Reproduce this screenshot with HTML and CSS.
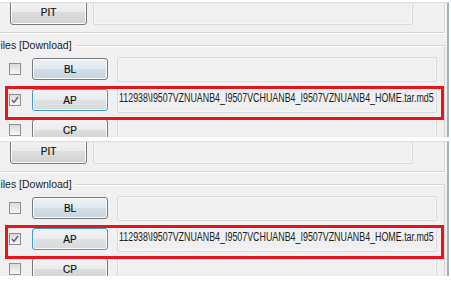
FILE: index.html
```html
<!DOCTYPE html>
<html lang="en">
<head>
  <meta charset="UTF-8">
  <title>Odin – Files [Download]</title>
  <link rel="stylesheet" href="styles.css">
</head>
<body>

  <!-- First capture -->
  <div class="shot first">
    <div class="pit-group">
      <span class="btn">PIT</span>
      <span class="field pit-field"></span>
    </div>
    <fieldset class="files">
      <legend>Files [Download]</legend>
      <div class="row">
        <span class="check"></span>
        <span class="btn tint">BL</span>
        <span class="field"></span>
      </div>
      <div class="row marked">
        <span class="check">
          <svg width="10" height="10" viewBox="0 0 10 10"><path d="M2 5 L4 7.5 L8 2" fill="none" stroke="#4a5d96" stroke-width="1.3"/></svg>
        </span>
        <span class="btn focus">AP</span>
        <span class="field"><span class="path">112938\I9507VZNUANB4_I9507VCHUANB4_I9507VZNUANB4_HOME.tar.md5</span></span>
      </div>
      <div class="row">
        <span class="check"></span>
        <span class="btn">CP</span>
        <span class="field"></span>
      </div>
    </fieldset>
  </div>

  <!-- Second capture -->
  <div class="shot second">
    <div class="pit-group">
      <span class="btn">PIT</span>
      <span class="field pit-field"></span>
    </div>
    <fieldset class="files">
      <legend>Files [Download]</legend>
      <div class="row">
        <span class="check"></span>
        <span class="btn tint">BL</span>
        <span class="field"></span>
      </div>
      <div class="row marked">
        <span class="check">
          <svg width="10" height="10" viewBox="0 0 10 10"><path d="M2 5 L4 7.5 L8 2" fill="none" stroke="#4a5d96" stroke-width="1.3"/></svg>
        </span>
        <span class="btn focus">AP</span>
        <span class="field"><span class="path">112938\I9507VZNUANB4_I9507VCHUANB4_I9507VZNUANB4_HOME.tar.md5</span></span>
      </div>
      <div class="row">
        <span class="check"></span>
        <span class="btn">CP</span>
        <span class="field"></span>
      </div>
    </fieldset>
  </div>

</body>
</html>
```

FILE: styles.css
```css
body {
  margin: 0;
  background-color: white;
  font-family: 'Liberation Sans', Arial, sans-serif;
  font-size: 11px;
  color: #1e1e1e;
}
.shot {
  width: 447px;
  height: 134px;
  overflow: hidden;
  background-color: #f0f0f0;
  border-top: 1px solid #dcdcdc;
  border-right: 2px solid #9fb1c3;
}
.first { margin-top: 2px; }
.second { margin-top: 4px; }

.pit-group {
  display: flex;
  gap: 6px;
  height: 29px;
  padding-left: 10px;
  margin-right: 2px;
  border-right: 1px solid #d5d5d5;
  border-bottom: 1px solid #d5d5d5;
  box-shadow: 1px 1px 0 white;
}
.pit-group .btn {
  width: 77px;
  height: 26px;
  margin-top: -4px;
  margin-left: 0;
}
.pit-field {
  width: 343px;
  height: 26px;
  margin-top: -3px;
}

.files {
  margin: 6px 2px 0 -8px;
  padding: 2px 0 0 8px;
  border: 1px solid #d5d5d5;
  border-left: none;
  box-shadow: inset 1px 1px 0 white;
}
.files legend {
  margin-left: -9px;
  padding: 0 3px;
  line-height: 13px;
  font-size: 10.5px;
  color: #222;
}

.row {
  display: flex;
  align-items: center;
  height: 30px;
  position: relative;
}
.row.marked { margin-top: 1px; }
.row.marked::after {
  content: "";
  position: absolute;
  z-index: 2;
  left: 5px;
  top: 1px;
  width: 439px;
  height: 34px;
  border: 3px solid #e8141b;
  box-sizing: border-box;
}

.check {
  width: 12px;
  height: 12px;
  margin-left: 9px;
  box-sizing: border-box;
  border: 1px solid #8e8f8f;
  background: linear-gradient(#dadada, #f7f7f7);
  display: flex;
  align-items: center;
  justify-content: center;
}

.btn {
  width: 76px;
  height: 22px;
  margin-left: 11px;
  box-sizing: border-box;
  border: 1px solid #7a7a7a;
  border-radius: 3px;
  background: linear-gradient(#f3f3f3 0%, #ebebeb 50%, #dddddd 51%, #d2d2d2 100%);
  box-shadow: inset 0 0 0 1px #fbfbfb;
  display: flex;
  align-items: center;
  justify-content: center;
  font-size: 10px;
  color: #111;
  -webkit-text-stroke: 0.2px #111;
}
.btn.tint {
  background: linear-gradient(#edf2f6 0%, #e1e9ef 50%, #d3dee7 51%, #c7d5e0 100%);
}
.btn.focus {
  border-color: #3c9bd8;
  background: linear-gradient(#f1f3f4 0%, #e9ebed 50%, #dfe2e5 51%, #d6dadd 100%);
}

.field {
  width: 320px;
  height: 25px;
  margin-left: 9px;
  box-sizing: border-box;
  border: 1px solid #d9d9d9;
  border-radius: 2px;
  background-color: #efefef;
  box-shadow: inset 0 0 0 1px #f6f6f6;
  padding: 2px 0 0 1px;
  white-space: nowrap;
}
.pit-field { margin-left: 0; }
.path {
  display: inline-block;
  font-size: 12px;
  transform: scaleX(0.74);
  transform-origin: left center;
}
```
